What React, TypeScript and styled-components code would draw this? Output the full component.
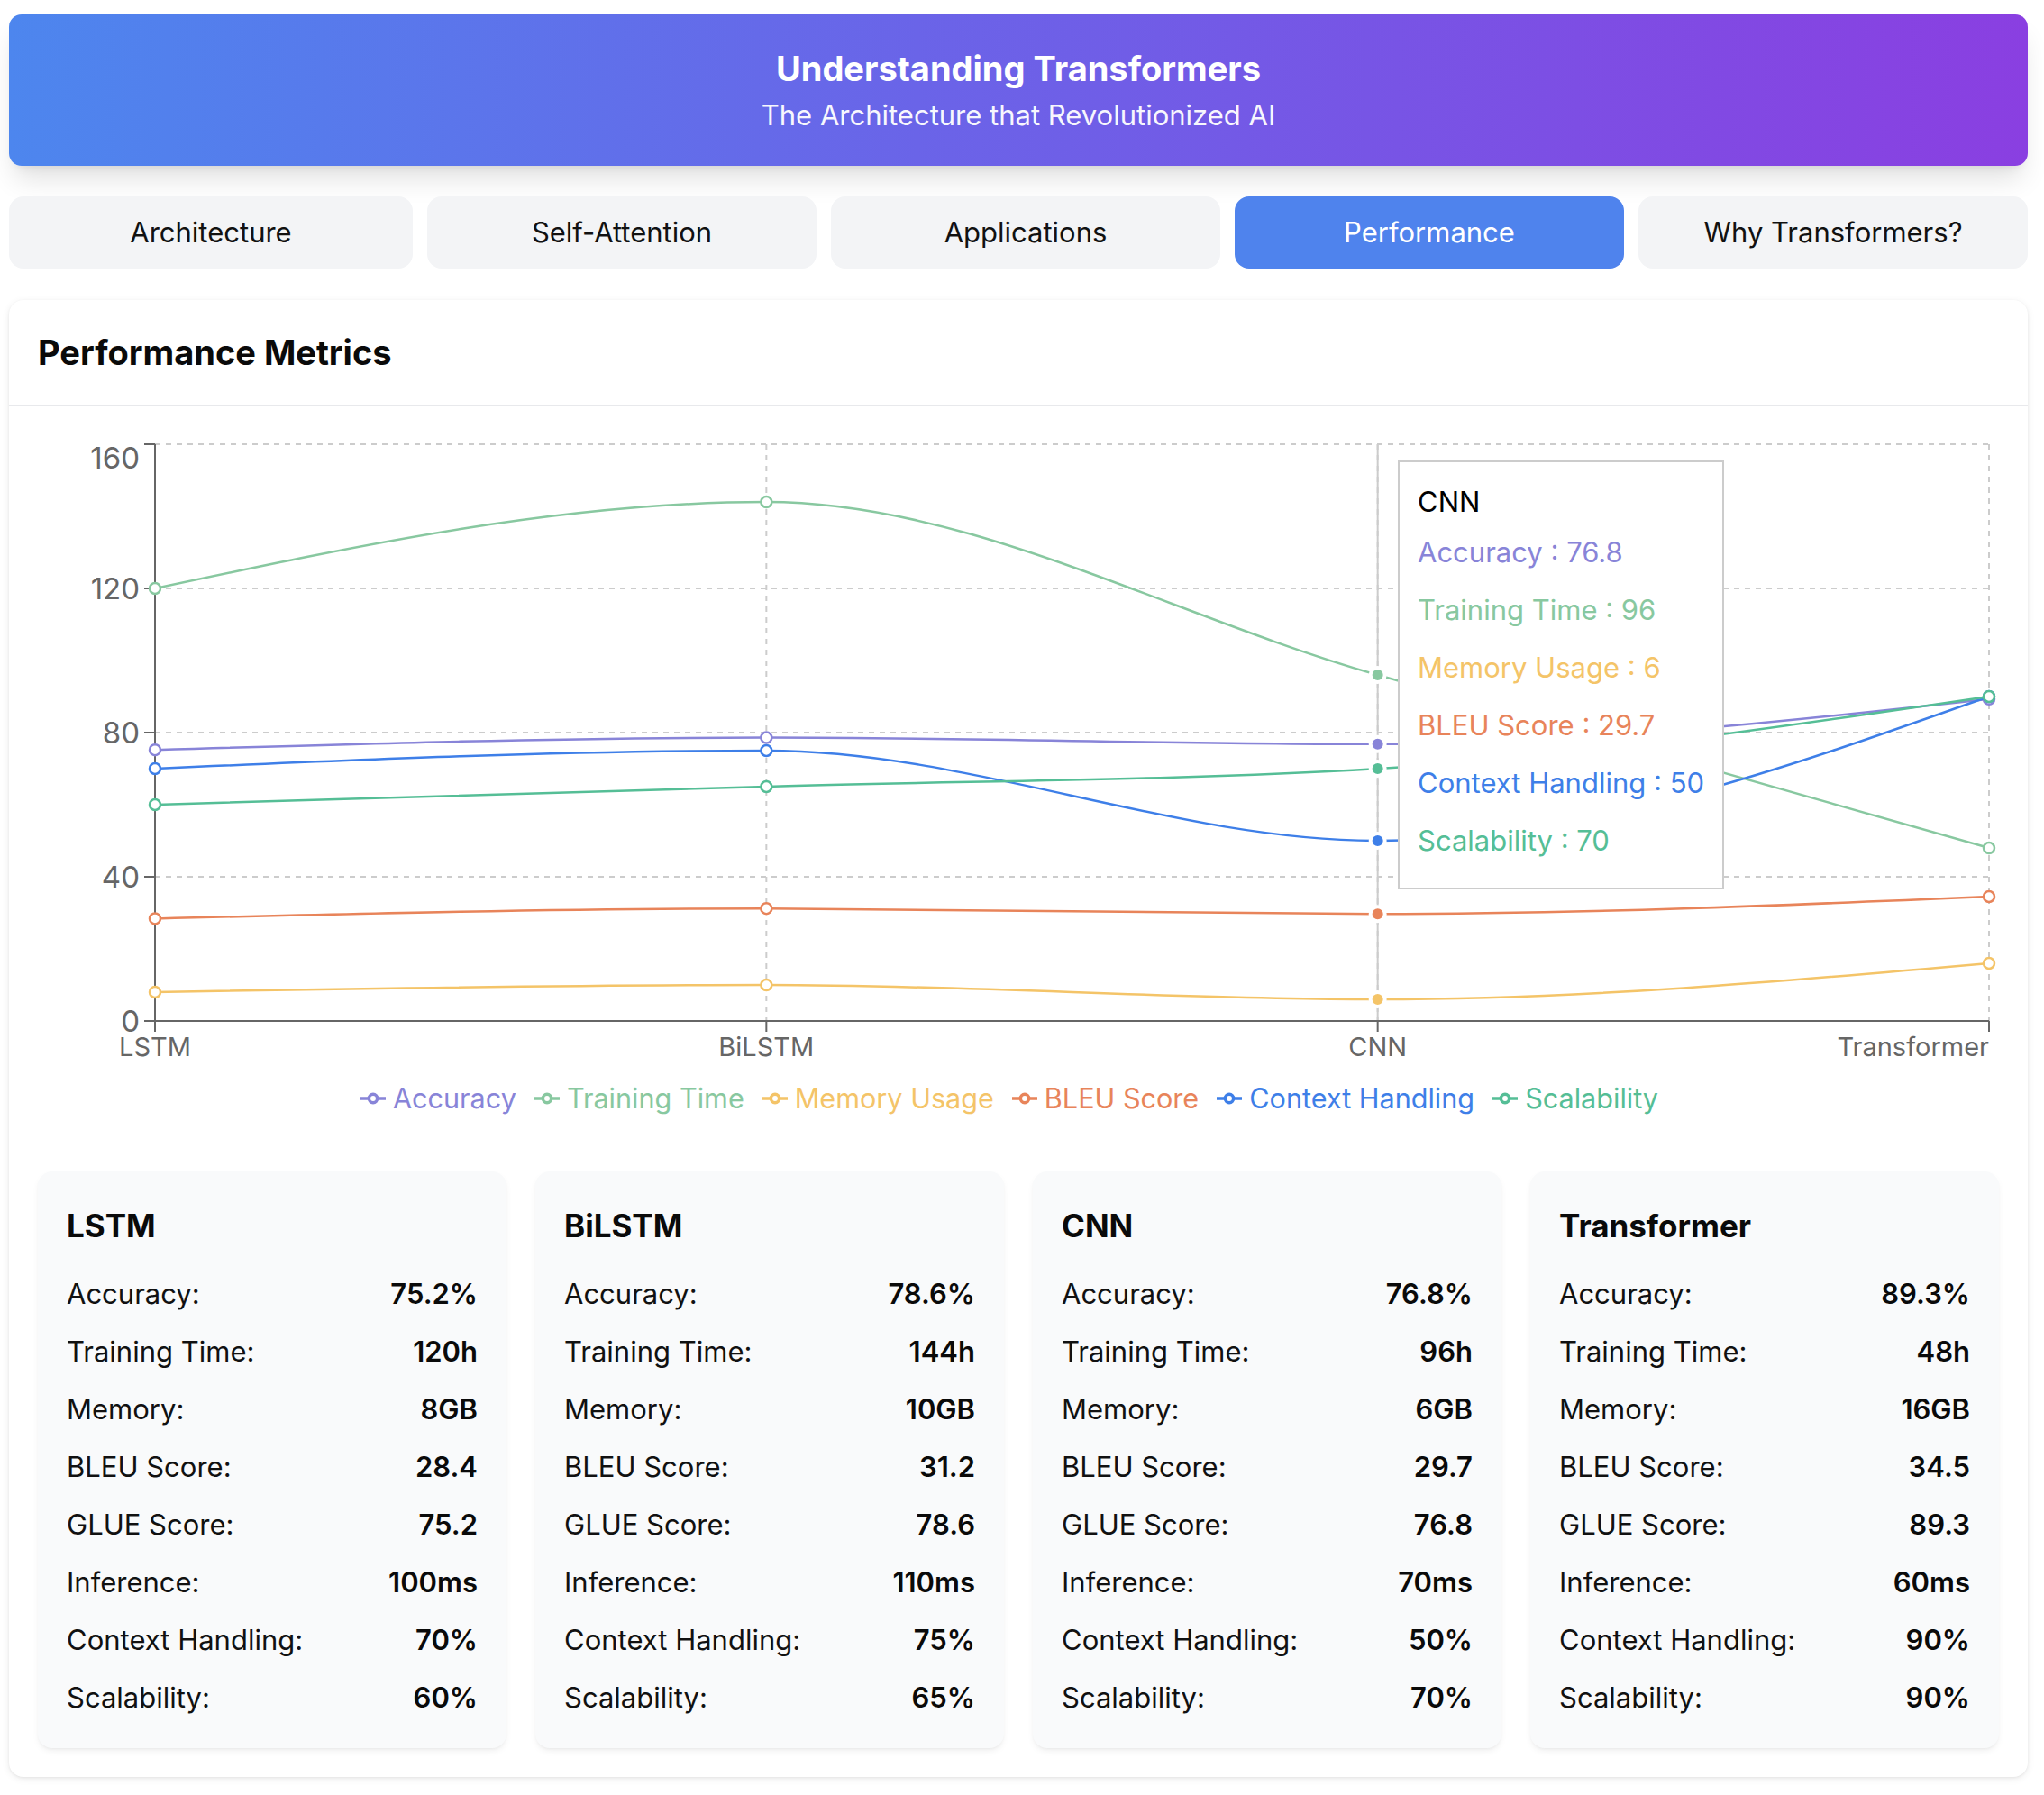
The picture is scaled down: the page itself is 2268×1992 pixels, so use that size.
import React from "react";
import styled, { createGlobalStyle } from "styled-components";

const GlobalStyle = createGlobalStyle`
  html, body { margin: 0; padding: 0; background: #ffffff; }
  body { font-family: Inter, "Noto Sans", "Liberation Sans", sans-serif; color: #111827; }
  * { box-sizing: border-box; }
`;

type Series = { key: string; name: string; color: string };

const SERIES: Series[] = [
  { key: "accuracy", name: "Accuracy", color: "#8884d8" },
  { key: "training", name: "Training Time", color: "#88c8a0" },
  { key: "memory", name: "Memory Usage", color: "#f4c468" },
  { key: "bleu", name: "BLEU Score", color: "#e8845a" },
  { key: "context", name: "Context Handling", color: "#3e7fe8" },
  { key: "scalability", name: "Scalability", color: "#55be96" },
];

type Model = {
  name: string;
  accuracy: number;
  training: number;
  memory: number;
  bleu: number;
  glue: number;
  inference: number;
  context: number;
  scalability: number;
};

const MODELS: Model[] = [
  { name: "LSTM", accuracy: 75.2, training: 120, memory: 8, bleu: 28.4, glue: 75.2, inference: 100, context: 70, scalability: 60 },
  { name: "BiLSTM", accuracy: 78.6, training: 144, memory: 10, bleu: 31.2, glue: 78.6, inference: 110, context: 75, scalability: 65 },
  { name: "CNN", accuracy: 76.8, training: 96, memory: 6, bleu: 29.7, glue: 76.8, inference: 70, context: 50, scalability: 70 },
  { name: "Transformer", accuracy: 89.3, training: 48, memory: 16, bleu: 34.5, glue: 89.3, inference: 60, context: 90, scalability: 90 },
];

const TABS = ["Architecture", "Self-Attention", "Applications", "Performance", "Why Transformers?"];

/* ---------- layout ---------- */

const Page = styled.div`
  padding: 16px 18px 20px 10px;
`;

const Header = styled.header`
  background: linear-gradient(90deg, #4d86ee 0%, #6a64e8 45%, #8a3fe1 100%);
  border-radius: 14px;
  padding: 32px;
  text-align: center;
  color: #ffffff;
  box-shadow: 0 20px 30px -6px rgba(0, 0, 0, 0.12), 0 8px 12px -8px rgba(0, 0, 0, 0.1);
`;

const Title = styled.h1`
  margin: 0;
  font-size: 38px;
  line-height: 56px;
  font-weight: 700;
`;

const Subtitle = styled.p`
  margin: 0;
  font-size: 31px;
  line-height: 48px;
  opacity: 0.95;
`;

const TabBar = styled.nav`
  margin-top: 34px;
  display: grid;
  grid-template-columns: 448px repeat(4, 1fr);
  gap: 16px;
`;

const Tab = styled.button<{ $active?: boolean }>`
  height: 80px;
  border: none;
  border-radius: 16px;
  background: ${(p) => (p.$active ? "#4f83ed" : "#f3f4f6")};
  color: ${(p) => (p.$active ? "#ffffff" : "#111111")};
  font-family: inherit;
  font-size: 31px;
  line-height: 48px;
  cursor: pointer;
`;

const Card = styled.section`
  margin-top: 35px;
  background: #ffffff;
  border-radius: 16px;
  box-shadow: 0 2px 8px rgba(0, 0, 0, 0.08), 0 1px 3px rgba(0, 0, 0, 0.06);
`;

const CardHeader = styled.div`
  padding: 30px 32px;
  border-bottom: 2px solid #e8e9ec;
`;

const CardTitle = styled.h2`
  margin: 0;
  font-size: 38px;
  line-height: 56px;
  font-weight: 700;
  color: #0a0a0a;
`;

const CardBody = styled.div`
  padding: 32px;
`;

const ChartArea = styled.div`
  position: relative;
`;

const ChartSvg = styled.svg`
  display: block;
  width: 2176px;
  height: 700px;
  font-family: Inter, "Noto Sans", "Liberation Sans", sans-serif;
`;

const TooltipBox = styled.div`
  position: absolute;
  left: 1509px;
  top: 28px;
  background: #ffffff;
  border: 2px solid #cccccc;
  padding: 20px;
  font-size: 31px;
  line-height: 48px;
  white-space: nowrap;
`;

const TooltipLabel = styled.div`
  color: #000000;
`;

const TooltipItem = styled.div<{ $color: string }>`
  color: ${(p) => p.$color};
  padding: 8px 0;
`;

const Legend = styled.ul`
  margin: 12px 0 0;
  padding: 0;
  list-style: none;
  display: flex;
  justify-content: center;
  font-size: 30.6px;
  line-height: 48px;
`;

const LegendItem = styled.li<{ $color: string }>`
  display: flex;
  align-items: center;
  margin-right: 20px;
  color: ${(p) => p.$color};
`;

const LegendIcon = styled.svg`
  width: 28px;
  height: 28px;
  margin-right: 8px;
`;

const StatsGrid = styled.div`
  margin-top: 57px;
  display: grid;
  grid-template-columns: repeat(4, 1fr);
  gap: 32px;
`;

const StatCard = styled.div`
  background: #f9fafb;
  border-radius: 16px;
  padding: 32px;
  box-shadow: 0 4px 8px -2px rgba(0, 0, 0, 0.08), 0 2px 4px -2px rgba(0, 0, 0, 0.06);
`;

const StatTitle = styled.h3`
  margin: 0 0 24px;
  font-size: 35px;
  line-height: 56px;
  font-weight: 700;
  color: #0a0a0a;
`;

const StatRow = styled.div`
  display: flex;
  justify-content: space-between;
  font-size: 31px;
  line-height: 48px;
  color: #111111;
  & + & {
    margin-top: 16px;
  }
`;

const StatValue = styled.span`
  font-weight: 600;
  color: #0a0a0a;
`;

/* ---------- chart geometry ---------- */

const W = 2176;
const AX = 130;
const XEND = 2165;
const PT = 10;
const PB = 650;
const yOf = (v: number) => PT + ((160 - v) / 160) * (PB - PT);
const xOf = (i: number) => AX + (i * (XEND - AX)) / 3;

function monotonePath(pts: [number, number][]): string {
  const n = pts.length;
  const sign = (x: number) => (x < 0 ? -1 : 1);
  const m: number[] = new Array(n).fill(0);
  for (let i = 1; i < n - 1; i++) {
    const [x0, y0] = pts[i - 1];
    const [x1, y1] = pts[i];
    const [x2, y2] = pts[i + 1];
    const h0 = x1 - x0;
    const h1 = x2 - x1;
    const s0 = (y1 - y0) / h0;
    const s1 = (y2 - y1) / h1;
    const p = (s0 * h1 + s1 * h0) / (h0 + h1);
    m[i] = (sign(s0) + sign(s1)) * Math.min(Math.abs(s0), Math.abs(s1), 0.5 * Math.abs(p)) || 0;
  }
  m[0] = ((3 * (pts[1][1] - pts[0][1])) / (pts[1][0] - pts[0][0]) - m[1]) / 2;
  m[n - 1] = ((3 * (pts[n - 1][1] - pts[n - 2][1])) / (pts[n - 1][0] - pts[n - 2][0]) - m[n - 2]) / 2;
  let d = `M${pts[0][0]},${pts[0][1]}`;
  for (let i = 0; i < n - 1; i++) {
    const [x0, y0] = pts[i];
    const [x1, y1] = pts[i + 1];
    const dx = (x1 - x0) / 3;
    d += `C${x0 + dx},${y0 + dx * m[i]},${x1 - dx},${y1 - dx * m[i + 1]},${x1},${y1}`;
  }
  return d;
}

const LEGEND_PATH =
  "M0,16h10.667 A5.333,5.333,0,1,1,21.333,16 H32M21.333,16 A5.333,5.333,0,1,1,10.667,16";

const ACTIVE = 2;

function PerformanceChart() {
  const yTicks = [0, 40, 80, 120, 160];
  return (
    <ChartSvg viewBox={`0 0 ${W} 700`}>
      {/* grid */}
      <g stroke="#cccccc" strokeWidth={2} strokeDasharray="6 6" fill="none">
        {yTicks
          .filter((t) => t > 0)
          .map((t) => (
            <line key={t} x1={AX} x2={XEND} y1={yOf(t)} y2={yOf(t)} />
          ))}
        {MODELS.map((_, i) =>
          i === 0 ? null : <line key={i} x1={xOf(i)} x2={xOf(i)} y1={PT} y2={PB} />
        )}
      </g>
      {/* cursor */}
      <line x1={xOf(ACTIVE)} x2={xOf(ACTIVE)} y1={PT} y2={PB} stroke="#cccccc" strokeWidth={2} />
      {/* axes */}
      <g stroke="#666666" strokeWidth={2}>
        <line x1={AX} x2={AX} y1={PT} y2={PB} />
        <line x1={AX} x2={XEND} y1={PB} y2={PB} />
        {yTicks.map((t) => (
          <line key={t} x1={AX - 12} x2={AX} y1={yOf(t)} y2={yOf(t)} />
        ))}
        {MODELS.map((_, i) => (
          <line key={i} x1={xOf(i)} x2={xOf(i)} y1={PB} y2={PB + 12} />
        ))}
      </g>
      <g fill="#666666" fontSize={33}>
        {yTicks.map((t) => (
          <text key={t} x={AX - 17} y={t === 160 ? 37 : yOf(t) + 12} textAnchor="end">
            {t}
          </text>
        ))}
      </g>
      <g fill="#666666" fontSize={29}>
        {MODELS.map((m, i) => (
          <text key={m.name} x={xOf(i)} y={689} textAnchor={i === 3 ? "end" : "middle"}>
            {m.name}
          </text>
        ))}
      </g>
      {/* lines */}
      {SERIES.map((s) => {
        const pts = MODELS.map((m, i) => [xOf(i), yOf((m as any)[s.key] as number)] as [number, number]);
        return (
          <g key={s.key}>
            <path d={monotonePath(pts)} fill="none" stroke={s.color} strokeWidth={2.5} />
            {pts.map(([x, y], i) => (
              <circle key={i} cx={x} cy={y} r={6} fill="#ffffff" stroke={s.color} strokeWidth={2.5} />
            ))}
            <circle cx={pts[ACTIVE][0]} cy={pts[ACTIVE][1]} r={8} fill={s.color} stroke="#ffffff" strokeWidth={4} />
          </g>
        );
      })}
    </ChartSvg>
  );
}

function ChartTooltip() {
  const m = MODELS[ACTIVE];
  return (
    <TooltipBox>
      <TooltipLabel>{m.name}</TooltipLabel>
      {SERIES.map((s) => (
        <TooltipItem key={s.key} $color={s.color}>
          {s.name} : {(m as any)[s.key]}
        </TooltipItem>
      ))}
    </TooltipBox>
  );
}

function ChartLegend() {
  return (
    <Legend>
      {SERIES.map((s) => (
        <LegendItem key={s.key} $color={s.color}>
          <LegendIcon viewBox="0 0 32 32">
            <path d={LEGEND_PATH} fill="none" stroke={s.color} strokeWidth={4} />
          </LegendIcon>
          {s.name}
        </LegendItem>
      ))}
    </Legend>
  );
}

function StatsCard({ m }: { m: Model }) {
  const rows: [string, string][] = [
    ["Accuracy:", `${m.accuracy}%`],
    ["Training Time:", `${m.training}h`],
    ["Memory:", `${m.memory}GB`],
    ["BLEU Score:", `${m.bleu}`],
    ["GLUE Score:", `${m.glue}`],
    ["Inference:", `${m.inference}ms`],
    ["Context Handling:", `${m.context}%`],
    ["Scalability:", `${m.scalability}%`],
  ];
  return (
    <StatCard>
      <StatTitle>{m.name}</StatTitle>
      {rows.map(([label, value]) => (
        <StatRow key={label}>
          <span>{label}</span>
          <StatValue>{value}</StatValue>
        </StatRow>
      ))}
    </StatCard>
  );
}

export default function App() {
  return (
    <>
      <GlobalStyle />
      <Page>
        <Header>
          <Title>Understanding Transformers</Title>
          <Subtitle>The Architecture that Revolutionized AI</Subtitle>
        </Header>
        <TabBar>
          {TABS.map((t) => (
            <Tab key={t} $active={t === "Performance"}>
              {t}
            </Tab>
          ))}
        </TabBar>
        <Card>
          <CardHeader>
            <CardTitle>Performance Metrics</CardTitle>
          </CardHeader>
          <CardBody>
            <ChartArea>
              <PerformanceChart />
              <ChartTooltip />
              <ChartLegend />
            </ChartArea>
            <StatsGrid>
              {MODELS.map((m) => (
                <StatsCard key={m.name} m={m} />
              ))}
            </StatsGrid>
          </CardBody>
        </Card>
      </Page>
    </>
  );
}
